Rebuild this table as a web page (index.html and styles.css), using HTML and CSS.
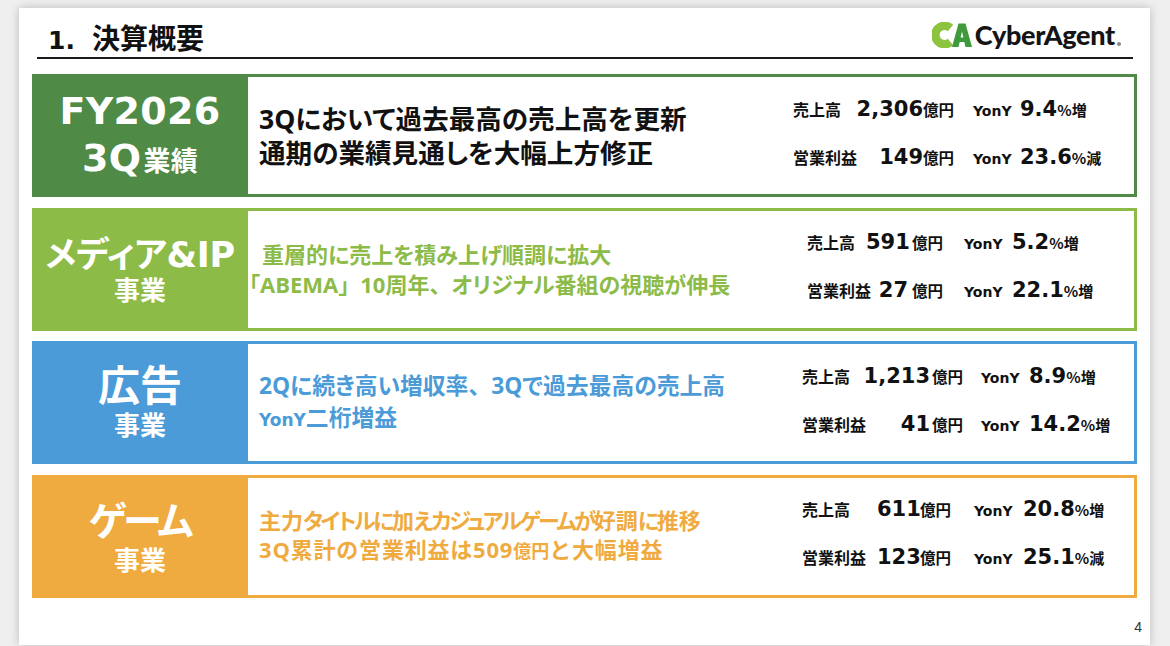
FILE: index.html
```html
<!DOCTYPE html>
<html lang="ja">
<head>
<meta charset="utf-8">
<title>決算概要</title>
<link rel="stylesheet" href="styles.css">
</head>
<body>
<div class="slide">
  <header class="head">
    <h1 class="title"><span class="title-num">1.</span>決算概要</h1>
    <div class="logo">
      <svg class="logo-mark" viewBox="0 0 40 26" width="40" height="26" aria-hidden="true">
        <path d="M18.5 6 A9.2 9.2 0 1 0 18.5 20" fill="none" stroke="#8cc43f" stroke-width="8.5"/>
        <path d="M20 25 L26.5 1.5 L33.5 1.5 L40 25 L33.5 25 L32.3 20 L27.7 20 L26.5 25 Z M28.6 15.5 L31.4 15.5 L30 9.5 Z" fill="#3f9a3b" fill-rule="evenodd"/>
      </svg>
      <span class="logo-text">CyberAgent</span><span class="logo-dot"></span>
    </div>
  </header>

  <section class="rows">
    <div class="row row-fy">
      <div class="tag">
        <div class="tag-main fy">FY2026</div>
        <div class="tag-main fy">3Q<span class="tag-small">業績</span></div>
      </div>
      <div class="panel">
        <div class="msg msg-fy">
          <span class="line">3Qにおいて過去最高の売上高を更新</span>
          <span class="line">通期の業績見通しを大幅上方修正</span>
        </div>
        <div class="stats stats-fy">
          <span class="lab">売上高</span><span class="num">2,306</span><span class="unit">億円</span><span class="yony">YonY</span><span class="val">9.4<span class="pct">%増</span></span>
          <span class="lab">営業利益</span><span class="num">149</span><span class="unit">億円</span><span class="yony">YonY</span><span class="val">23.6<span class="pct">%減</span></span>
        </div>
      </div>
    </div>

    <div class="row row-media">
      <div class="tag">
        <div class="tag-main media">メディア&amp;IP</div>
        <div class="tag-sub">事業</div>
      </div>
      <div class="panel">
        <div class="msg msg-media">
          <span class="line indent">重層的に売上を積み上げ順調に拡大</span>
          <span class="line">「ABEMA<span class="fw">」</span>10周年<span class="fw">、</span>オリジナル番組の視聴が伸長</span>
        </div>
        <div class="stats stats-media">
          <span class="lab">売上高</span><span class="num">591</span><span class="unit">億円</span><span class="yony">YonY</span><span class="val">5.2<span class="pct">%増</span></span>
          <span class="lab">営業利益</span><span class="num">27</span><span class="unit">億円</span><span class="yony">YonY</span><span class="val">22.1<span class="pct">%増</span></span>
        </div>
      </div>
    </div>

    <div class="row row-ad">
      <div class="tag">
        <div class="tag-main big">広告</div>
        <div class="tag-sub">事業</div>
      </div>
      <div class="panel">
        <div class="msg msg-ad">
          <span class="line">2Qに続き高い増収率<span class="fw">、</span>3Qで過去最高の売上高</span>
          <span class="line"><span class="msg-yony">YonY</span>二桁増益</span>
        </div>
        <div class="stats stats-ad">
          <span class="lab">売上高</span><span class="num">1,213</span><span class="unit">億円</span><span class="yony">YonY</span><span class="val">8.9<span class="pct">%増</span></span>
          <span class="lab">営業利益</span><span class="num">41</span><span class="unit">億円</span><span class="yony">YonY</span><span class="val">14.2<span class="pct">%増</span></span>
        </div>
      </div>
    </div>

    <div class="row row-game">
      <div class="tag">
        <div class="tag-main big game">ゲーム</div>
        <div class="tag-sub">事業</div>
      </div>
      <div class="panel">
        <div class="msg msg-game">
          <span class="line">主力<span class="kn">タイトルに</span>加<span class="kn">えカジュアルゲームが</span>好調<span class="kn">に</span>推移</span>
          <span class="line fw wide">3Q累計の営業利益は509<span class="msg-unit">億円</span>と大幅増益</span>
        </div>
        <div class="stats stats-game">
          <span class="lab">売上高</span><span class="num">611</span><span class="unit">億円</span><span class="yony">YonY</span><span class="val">20.8<span class="pct">%増</span></span>
          <span class="lab">営業利益</span><span class="num">123</span><span class="unit">億円</span><span class="yony">YonY</span><span class="val">25.1<span class="pct">%減</span></span>
        </div>
      </div>
    </div>
  </section>

  <footer class="foot">4</footer>
</div>
</body>
</html>
```

FILE: styles.css
```css
html, body {
  margin: 0;
  padding: 0;
}
body {
  background: #efefef;
  font-family: "DejaVu Sans", "Noto Sans CJK JP", sans-serif;
  font-weight: 700;
  color: #111;
  font-feature-settings: "palt";
  width: 1170px;
  height: 646px;
  overflow: hidden;
}
.slide {
  margin: 8px 0 0 19px;
  width: 1131px;
  height: 637px;
  background: #fff;
  box-shadow: 0 0 9px rgba(0, 0, 0, 0.22);
  display: flex;
  flex-direction: column;
}

/* header */
.head {
  margin: 0 17px 0 18px;
  height: 49px;
  border-bottom: 2px solid #1b1b1b;
  display: flex;
  align-items: flex-end;
  justify-content: space-between;
}
.title {
  margin: 0 0 4px 11px;
  font-size: 28px;
  line-height: 1;
  font-weight: 700;
  font-family: "Noto Sans CJK JP", sans-serif;
  color: #111;
}
.title-num {
  font-family: "DejaVu Sans", sans-serif;
  font-size: 25px;
  margin-right: 17px;
}
.logo {
  display: flex;
  align-items: center;
  margin: 0 12px 9px 0;
}
.logo-mark {
  display: block;
  margin-right: 3px;
}
.logo-text {
  font-family: "Lato", "Noto Sans", sans-serif;
  font-weight: 900;
  font-size: 27px;
  letter-spacing: -0.3px;
  line-height: 26px;
  color: #151515;
}
.logo-dot {
  width: 4px;
  height: 4px;
  border-radius: 50%;
  background: #8a8a8a;
  align-self: flex-end;
  margin: 0 0 2px 2px;
}

/* rows */
.rows {
  margin: 15px 0 0 13px;
  width: 1105px;
  display: flex;
  flex-direction: column;
  gap: 10.5px;
}
.row {
  height: 123px;
  display: flex;
}
.tag {
  width: 216px;
  flex: 0 0 216px;
  box-sizing: border-box;
  color: #fff;
  display: flex;
  flex-direction: column;
  align-items: center;
  justify-content: center;
}
.panel {
  flex: 1;
  background: #fff;
  border: 3px solid;
  border-left: 0;
  display: grid;
  align-items: center;
}
.row-fy .tag { background: #4f8a46; padding-top: 2px; }
.row-fy .panel { border-color: #4f8a46; grid-template-columns: 545px 1fr; }
.row-media .tag { background: #8dbb48; padding-top: 6px; }
.row-media .panel { border-color: #8dbb48; grid-template-columns: 559px 1fr; }
.row-ad .tag { background: #4a9bd8; padding-top: 2px; }
.row-ad .panel { border-color: #4a9bd8; grid-template-columns: 554px 1fr; }
.row-game .tag { background: #efab3f; padding-top: 6px; }
.row-game .panel { border-color: #efab3f; grid-template-columns: 554px 1fr; }

/* tag texts */
.tag-main {
  line-height: 1;
  white-space: nowrap;
}
.fy {
  font-size: 38px;
  line-height: 47px;
  letter-spacing: 0.3px;
}
.tag-small {
  font-size: 27px;
  margin-left: 2px;
}
.media {
  font-size: 35px;
  line-height: 38px;
  letter-spacing: -0.3px;
}
.big {
  font-size: 42px;
  line-height: 44px;
}
.game {
  font-size: 39px;
  letter-spacing: -2.5px;
}
.tag-sub {
  font-size: 26px;
  line-height: 34px;
  margin-top: 0;
}

/* messages */
.msg {
  display: flex;
  flex-direction: column;
  white-space: nowrap;
  font-family: "Open Sans", "Noto Sans CJK JP", sans-serif;
}
.line {
  display: block;
}
.fw {
  font-feature-settings: normal;
}
.kn {
  letter-spacing: -2.4px;
}
.wide {
  letter-spacing: 0.8px;
}
.msg-fy {
  margin-left: 11px;
  font-size: 26.6px;
  line-height: 34px;
  color: #111;
}
.msg-media {
  margin-left: 1px;
  font-size: 22px;
  line-height: 30px;
  color: #8dbb48;
}
.indent {
  padding-left: 13px;
}
.msg-ad {
  margin-left: 11px;
  font-size: 22.8px;
  line-height: 32px;
  color: #4a9bd8;
}
.msg-yony {
  font-family: "DejaVu Sans", sans-serif;
  font-size: 17px;
}
.msg-game {
  margin-left: 11px;
  font-size: 22px;
  line-height: 29px;
  color: #efab3f;
}
.msg-unit {
  font-size: 18px;
  letter-spacing: 0;
}

/* stats */
.stats {
  display: grid;
  align-items: baseline;
  row-gap: 20px;
  white-space: nowrap;
  line-height: 26px;
  margin-bottom: 4px;
  color: #111;
}
.stats-fy { grid-template-columns: 60px 70px 50px 47px auto; }
.stats-media { grid-template-columns: 59px 42px 56px 48px auto; }
.stats-ad { grid-template-columns: 61px 67px 51px 48px auto; }
.stats-game { grid-template-columns: 75px 43px 54px 49px auto; }
.lab {
  font-size: 16px;
  font-family: "Noto Sans CJK JP", sans-serif;
}
.num {
  font-size: 21px;
  text-align: right;
}
.unit {
  font-size: 15.5px;
  font-family: "Noto Sans CJK JP", sans-serif;
}
.stats-media .unit { padding-left: 4px; }
.stats-ad .unit { padding-left: 2px; }
.yony {
  font-size: 14px;
}
.val {
  font-size: 21px;
}
.pct {
  font-size: 15px;
  font-family: "Noto Sans CJK JP", sans-serif;
}

/* footer */
.foot {
  margin-top: auto;
  padding: 0 8px 10px 0;
  text-align: right;
  font-family: "Liberation Sans", sans-serif;
  font-weight: 400;
  font-size: 14px;
  line-height: 16px;
  color: #333;
}
```
